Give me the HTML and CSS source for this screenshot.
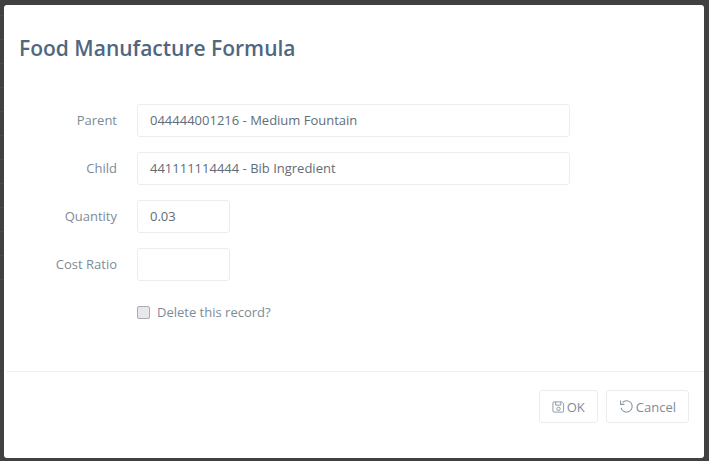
FILE: index.html
```html
<!DOCTYPE html>
<html lang="en">
<head>
<meta charset="utf-8">
<title>Food Manufacture Formula</title>
<link rel="stylesheet" href="styles.css">
</head>
<body>
<div class="backdrop">
  <div class="modal">
    <header class="modal-header"><h4 class="modal-title">Food Manufacture Formula</h4></header>
    <form class="modal-body">
      <div class="row"><label class="lbl">Parent</label><input class="field wide" type="text" value="044444001216 - Medium Fountain"></div>
      <div class="row"><label class="lbl">Child</label><input class="field wide" type="text" value="441111114444 - Bib Ingredient"></div>
      <div class="row"><label class="lbl">Quantity</label><input class="field small" type="text" value="0.03"></div>
      <div class="row"><label class="lbl">Cost Ratio</label><input class="field small" type="text" value=""></div>
      <div class="row check-row"><span class="lbl"></span><label class="check"><input class="box" type="checkbox"><span>Delete this record?</span></label></div>
    </form>
    <footer class="modal-footer">
      <button class="btn" type="button"><svg class="ico" viewBox="0 0 14 14" width="13" height="14" fill="none" stroke="#8596a3" stroke-width="1"><path d="M2 1.500h8.500l2 2v8a1 1 0 0 1-1 1h-9.500a1 1 0 0 1-1-1v-9a1 1 0 0 1 1-1z"/><path d="M4 1.500v3.500h5.500v-3.500"/><circle cx="7" cy="9" r="1.800"/></svg>OK</button>
      <button class="btn" type="button"><svg class="ico" viewBox="0 0 14 14" width="15" height="15" fill="none" stroke="#8596a3" stroke-width="1"><path d="M3.200 3.200a5.300 5.300 0 1 1-1.300 5"/><path d="M1.500 1.500v3.500h3.500" fill="none"/></svg>Cancel</button>
    </footer>
  </div>
</div>
</body>
</html>
```
FILE: styles.css
```css
* { box-sizing: border-box; }
html, body { margin: 0; height: 100%; }
body { background: #414141; font-family: "Open Sans", sans-serif; overflow: hidden; }
.backdrop { height: 461px; padding: 5px 5px 3px 4px; background: repeating-linear-gradient(to bottom, #4b4b4b 0, #4b4b4b 1px, transparent 1px, transparent 24px) 0 15px / 4px 288px no-repeat; }
.modal { background: #fff; height: 453px; border-radius: 3px; display: flex; flex-direction: column; }
.modal-header { height: 85px; padding: 28px 15px 0; }
.modal-title { margin: 0; font-size: 21px; line-height: 30px; font-weight: 600; color: #4f6781; }
.modal-body { flex: 1; padding: 14px 0 0; display: flex; flex-direction: column; }
.row { display: flex; align-items: center; height: 33px; margin-bottom: 15px; }
.lbl { width: 113px; text-align: right; font-size: 13px; line-height: 18px; color: #7d8b97; margin: 0 20px 2px 0; flex: none; }
.field { height: 33px; border: 1px solid #e9edf0; border-radius: 3px; padding: 0 12px 2px; font: 13px "Open Sans", sans-serif; color: #5f6d78; background: #fff; outline: none; }
.wide { width: 433px; }
.small { width: 93px; }
.check-row { height: 16px; margin-top: 8px; margin-bottom: 0; }
.check { display: flex; align-items: center; font-size: 13px; color: #7d8b97; }
.box { appearance: none; width: 13px; height: 13px; margin: 0 7px 0 0; border: 1px solid #a9adb1; border-radius: 2px; background: #e6e8ea; }
.modal-footer { height: 87px; border-top: 1px solid #eef0f2; margin: 0 0 0 2px; padding: 18px 15px 0 0; display: flex; justify-content: flex-end; gap: 8px; align-items: flex-start; }
.btn { height: 33px; padding: 0 12px; display: flex; align-items: center; gap: 2px; background: #fff; border: 1px solid #e9edf0; border-radius: 3px; font: 13px "Open Sans", sans-serif; color: #7d8b97; }
.ico { flex: none; }
```
